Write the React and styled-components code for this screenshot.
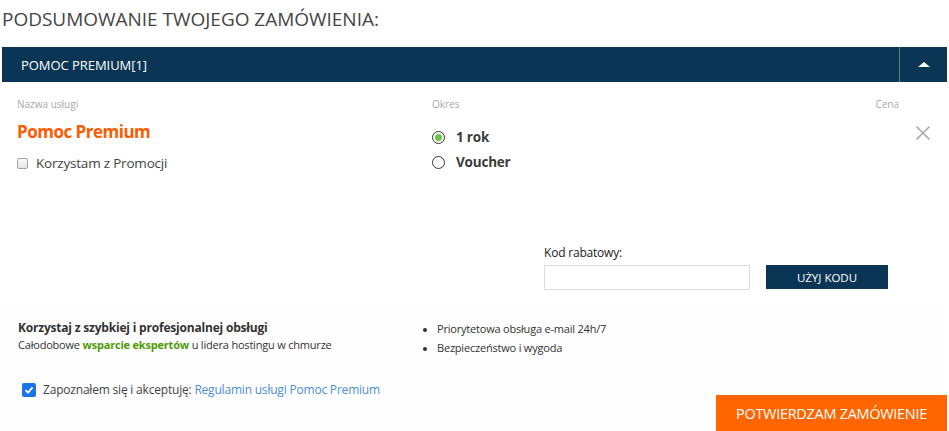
import React, { useState } from "react";
import styled, { createGlobalStyle } from "styled-components";

const GlobalStyle = createGlobalStyle`
  body {
    margin: 0;
    background: #fff;
    font-family: "Open Sans", "Noto Sans", sans-serif;
    color: #444;
  }
`;

const Page = styled.div`
  width: 949px;
  height: 431px;
  overflow: hidden;
  display: flex;
  flex-direction: column;
  & > * {
    flex-shrink: 0;
  }
`;

const Title = styled.h1`
  margin: 0;
  padding: 6px 0 0 2px;
  height: 47px;
  box-sizing: border-box;
  font-size: 19px;
  font-weight: 400;
  color: #454545;
  letter-spacing: -0.02px;
`;

const Bar = styled.div`
  margin: 0 2px;
  height: 35px;
  background: #0b3554;
  display: flex;
  align-items: center;
`;

const BarTitle = styled.div`
  flex: 1;
  padding-left: 19px;
  color: #fff;
  font-size: 13px;
  letter-spacing: -0.05px;
`;

const Toggle = styled.button`
  width: 48px;
  height: 35px;
  border: 0;
  border-left: 1px solid #6b7a86;
  background: transparent;
  display: flex;
  align-items: center;
  justify-content: center;
  cursor: pointer;
  padding: 0;
`;

const Arrow = styled.span`
  width: 0;
  height: 0;
  border-left: 6px solid transparent;
  border-right: 6px solid transparent;
  border-bottom: 5px solid #fff;
  transform: ${(p) => (p.open ? "none" : "rotate(180deg)")};
`;

const Body = styled.div`
  margin: 0 2px;
  height: 218px;
  display: grid;
  grid-template-columns: 415px 1fr 80px;
  grid-template-rows: 140px 1fr;
  padding: 16px 0 10px 15px;
  box-sizing: border-box;
`;

const Column = styled.div`
  display: flex;
  flex-direction: column;
`;

const Label = styled.div`
  font-size: 10px;
  line-height: 12px;
  color: #a9a9a9;
  text-align: ${(p) => p.align || "left"};
  padding-right: ${(p) => p.pr || 0}px;
`;

const ServiceName = styled.div`
  margin-top: 11px;
  font-size: 17px;
  font-weight: 700;
  color: #ff5a00;
  line-height: 22px;
  letter-spacing: -0.5px;
`;

const CheckRow = styled.label`
  display: flex;
  align-items: center;
  gap: 8px;
  margin-top: 11px;
  font-size: 13.5px;
  color: #444;
  letter-spacing: -0.2px;
`;

const Box = styled.span`
  width: 11px;
  height: 11px;
  border: 1px solid #a5a5a5;
  border-radius: 2px;
  background: linear-gradient(#fafafa, #e6e6e6);
  box-sizing: border-box;
`;

const Radios = styled.div`
  display: flex;
  flex-direction: column;
  gap: 7px;
  margin-top: 18px;
`;

const RadioRow = styled.label`
  display: flex;
  align-items: center;
  gap: 11px;
  font-size: 13.5px;
  font-weight: 700;
  color: #3b3b3b;
  height: 18px;
  cursor: pointer;
  letter-spacing: -0.2px;
`;

const RadioDot = styled.span`
  width: 13px;
  height: 13px;
  border-radius: 50%;
  border: 1.5px solid #333;
  box-sizing: border-box;
  display: flex;
  align-items: center;
  justify-content: center;
  &::after {
    content: "";
    width: 7px;
    height: 7px;
    border-radius: 50%;
    background: ${(p) => (p.checked ? "#6cc644" : "transparent")};
  }
`;

const PriceCol = styled.div`
  display: flex;
  flex-direction: column;
  align-items: flex-end;
`;

const Close = styled.button`
  margin-top: 15px;
  margin-right: 16px;
  width: 16px;
  height: 16px;
  padding: 0;
  border: 0;
  background: transparent;
  cursor: pointer;
`;

const Discount = styled.div`
  grid-column: 1 / -1;
  display: flex;
  align-items: flex-end;
  gap: 16px;
  padding-left: 527px;
`;

const Field = styled.div`
  display: flex;
  flex-direction: column;
  gap: 4px;
`;

const FieldLabel = styled.label`
  font-size: 12px;
  color: #222;
  letter-spacing: -0.2px;
`;

const Input = styled.input`
  width: 206px;
  height: 25px;
  box-sizing: border-box;
  border: 1px solid #ddd;
  outline: none;
`;

const NavyButton = styled.button`
  width: 122px;
  height: 24px;
  margin-bottom: 1px;
  border: 0;
  background: #0b3554;
  color: #fff;
  font-family: inherit;
  font-size: 11.5px;
  font-weight: 500;
  letter-spacing: 0;
  cursor: pointer;
`;

const Footer = styled.div`
  flex: 1;
  margin: 0 2px;
  background: #fefefe;
  display: flex;
  flex-direction: column;
`;

const Info = styled.div`
  display: grid;
  grid-template-columns: 405px 1fr;
  padding: 19px 0 0 16px;
  height: 81px;
  box-sizing: border-box;
`;

const InfoText = styled.div`
  font-size: 11px;
  line-height: 17px;
  color: #333;
  letter-spacing: -0.2px;
`;

const Strong = styled.div`
  font-weight: 700;
  font-size: 12px;
`;

const Green = styled.strong`
  color: #4e9a06;
`;

const Bullets = styled.ul`
  margin: 0;
  padding: 0 0 0 14px;
  font-size: 11px;
  line-height: 19px;
  color: #333;
  letter-spacing: -0.2px;
  li::marker {
    font-size: 10px;
  }
`;

const Terms = styled.label`
  display: flex;
  align-items: center;
  gap: 7px;
  padding-left: 20px;
  height: 17px;
  font-size: 12px;
  color: #444;
  letter-spacing: -0.2px;
`;

const Tick = styled.span`
  width: 14px;
  height: 14px;
  border-radius: 2px;
  background: #1a73e8;
  display: flex;
  align-items: center;
  justify-content: center;
`;

const Link = styled.a`
  color: #4a90d0;
  text-decoration: none;
`;

const Actions = styled.div`
  display: flex;
  justify-content: flex-end;
  margin-top: -3px;
`;

const ConfirmButton = styled.button`
  width: 231px;
  height: 36px;
  border: 0;
  background: #ff6500;
  color: #fff;
  font-family: inherit;
  font-size: 14.5px;
  letter-spacing: -0.3px;
  cursor: pointer;
`;

export default function App() {
  const [open, setOpen] = useState(true);
  const [period, setPeriod] = useState("rok");

  return (
    <Page>
      <GlobalStyle />
      <Title>PODSUMOWANIE TWOJEGO ZAMÓWIENIA:</Title>
      <Bar>
        <BarTitle>POMOC PREMIUM[1]</BarTitle>
        <Toggle onClick={() => setOpen(!open)}>
          <Arrow open={open} />
        </Toggle>
      </Bar>
      <Body>
        <Column>
          <Label>Nazwa usługi</Label>
          <ServiceName>Pomoc Premium</ServiceName>
          <CheckRow>
            <Box />
            Korzystam z Promocji
          </CheckRow>
        </Column>
        <Column>
          <Label>Okres</Label>
          <Radios>
            <RadioRow onClick={() => setPeriod("rok")}>
              <RadioDot checked={period === "rok"} />1 rok
            </RadioRow>
            <RadioRow onClick={() => setPeriod("voucher")}>
              <RadioDot checked={period === "voucher"} />
              Voucher
            </RadioRow>
          </Radios>
        </Column>
        <PriceCol>
          <Label align="right" pr={48}>Cena</Label>
          <Close aria-label="Usuń">
            <svg width="16" height="16" viewBox="0 0 16 16">
              <path d="M1.5 1.5L14.5 14.5M14.5 1.5L1.5 14.5" stroke="#a8a8a8" strokeWidth="1.6" />
            </svg>
          </Close>
        </PriceCol>
        <Discount>
          <Field>
            <FieldLabel>Kod rabatowy:</FieldLabel>
            <Input type="text" />
          </Field>
          <NavyButton>UŻYJ KODU</NavyButton>
        </Discount>
      </Body>
      <Footer>
        <Info>
          <InfoText>
            <Strong>Korzystaj z szybkiej i profesjonalnej obsługi</Strong>
            Całodobowe <Green>wsparcie ekspertów</Green> u lidera hostingu w chmurze
          </InfoText>
          <Bullets>
            <li>Priorytetowa obsługa e-mail 24h/7</li>
            <li>Bezpieczeństwo i wygoda</li>
          </Bullets>
        </Info>
        <Terms>
          <Tick>
            <svg width="10" height="10" viewBox="0 0 10 10">
              <path d="M1.5 5.2L4 7.6L8.6 2.4" stroke="#fff" strokeWidth="1.8" fill="none" />
            </svg>
          </Tick>
          <span>
            Zapoznałem się i akceptuję: <Link href="#">Regulamin usługi Pomoc Premium</Link>
          </span>
        </Terms>
        <Actions>
          <ConfirmButton>POTWIERDZAM ZAMÓWIENIE</ConfirmButton>
        </Actions>
      </Footer>
    </Page>
  );
}
